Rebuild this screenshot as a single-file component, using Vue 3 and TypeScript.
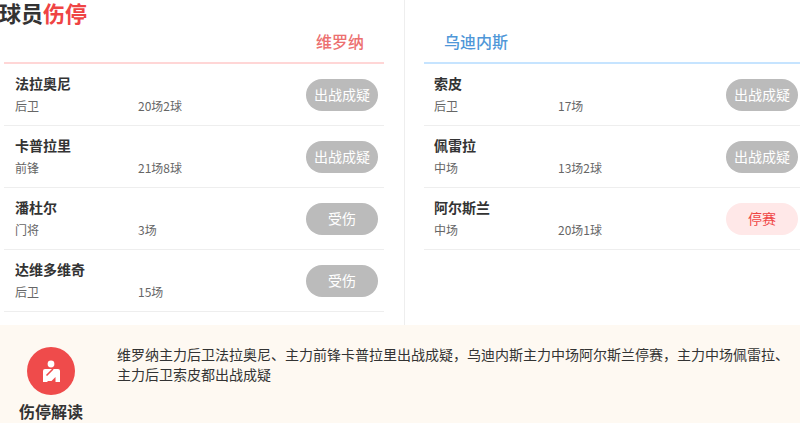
<script setup lang="ts">
interface Player { name: string; pos: string; stat: string; status: string; kind: 'grey' | 'red' }
const left: Player[] = [
  { name: '法拉奥尼', pos: '后卫', stat: '20场2球', status: '出战成疑', kind: 'grey' },
  { name: '卡普拉里', pos: '前锋', stat: '21场8球', status: '出战成疑', kind: 'grey' },
  { name: '潘杜尔', pos: '门将', stat: '3场', status: '受伤', kind: 'grey' },
  { name: '达维多维奇', pos: '后卫', stat: '15场', status: '受伤', kind: 'grey' },
]
const right: Player[] = [
  { name: '索皮', pos: '后卫', stat: '17场', status: '出战成疑', kind: 'grey' },
  { name: '佩雷拉', pos: '中场', stat: '13场2球', status: '出战成疑', kind: 'grey' },
  { name: '阿尔斯兰', pos: '中场', stat: '20场1球', status: '停赛', kind: 'red' },
]
</script>

<template>
  <div class="page">
    <div class="columns">
      <section class="col col-left">
        <h2 class="title">球员<span>伤停</span></h2>
        <div class="team team-left">维罗纳</div>
        <div v-for="p in left" :key="p.name" class="row">
          <div class="info">
            <div class="name">{{ p.name }}</div>
            <div class="meta"><span class="pos">{{ p.pos }}</span><span>{{ p.stat }}</span></div>
          </div>
          <span class="badge" :class="p.kind">{{ p.status }}</span>
        </div>
      </section>
      <section class="col col-right">
        <div class="team team-right">乌迪内斯</div>
        <div v-for="p in right" :key="p.name" class="row">
          <div class="info">
            <div class="name">{{ p.name }}</div>
            <div class="meta"><span class="pos">{{ p.pos }}</span><span>{{ p.stat }}</span></div>
          </div>
          <span class="badge" :class="p.kind">{{ p.status }}</span>
        </div>
      </section>
    </div>
    <div class="summary">
      <div class="summary-head">
        <div class="circle">
          <svg width="24" height="24" viewBox="0 0 24 24">
            <circle cx="12" cy="5" r="3.4" fill="#fff" />
            <path fill="#fff" d="M4 23 L4 12 Q4 10 6 10 L19 10 Q21 10 21 12 L21 23 Z" />
            <path fill="none" stroke="#ef4b4b" stroke-width="1.6" d="M7.5 16.5 L14 10" />
            <path fill="#ef4b4b" d="M8.5 23 L8.5 22 L12.5 22 L16.5 18 L16.5 23 Z" />
          </svg>
        </div>
        <div class="summary-label">伤停解读</div>
      </div>
      <p class="summary-text">维罗纳主力后卫法拉奥尼、主力前锋卡普拉里出战成疑，乌迪内斯主力中场阿尔斯兰停赛，主力中场佩雷拉、主力后卫索皮都出战成疑</p>
    </div>
  </div>
</template>

<style scoped>
.page {
  width: 800px;
  height: 423px;
  overflow: hidden;
  background: #fff;
  font-family: "Noto Sans CJK SC", "Liberation Sans", sans-serif;
  color: #333;
}
.columns {
  display: flex;
  height: 325px;
}
.col {
  box-sizing: border-box;
}
.col-left {
  width: 405px;
  padding: 0 20px 0 4px;
  border-right: 1px solid #eee;
}
.col-right {
  flex: 1;
  padding: 24px 0 0 19px;
}
.title {
  margin: 0 0 0 -5px;
  height: 24px;
  font-size: 22px;
  line-height: 24px;
  font-weight: 700;
  color: #333;
}
.title span {
  color: #ef4444;
}
.team {
  box-sizing: border-box;
  height: 40px;
  padding: 0 20px;
  font-size: 16px;
  line-height: 34px;
  font-weight: 500;
}
.team-left {
  text-align: right;
  color: #ec7070;
  border-bottom: 2px solid #ffd6d6;
}
.team-right {
  color: #4f97d8;
  border-bottom: 2px solid #c6e4ff;
}
.row {
  box-sizing: border-box;
  height: 62px;
  display: flex;
  align-items: center;
  justify-content: space-between;
  padding: 0 6px 0 11px;
  border-bottom: 1px solid #eee;
}
.col-right .row {
  padding: 0 2px 0 10px;
}
.name {
  font-size: 14px;
  line-height: 18px;
  font-weight: 700;
  color: #333;
}
.meta {
  display: flex;
  margin-top: 4px;
  font-size: 12px;
  line-height: 20px;
  color: #666;
}
.pos {
  width: 123px;
}
.col-right .pos {
  width: 124px;
}
.badge {
  width: 72px;
  height: 32px;
  border-radius: 16px;
  font-size: 14px;
  line-height: 31px;
  text-align: center;
}
.badge.grey {
  background: #bbb;
  color: #fff;
}
.badge.red {
  background: #ffe8e8;
  color: #ef4444;
}
.summary {
  height: 98px;
  background: #fef9f2;
  display: flex;
  box-sizing: border-box;
}
.summary-head {
  width: 102px;
  flex: none;
  display: flex;
  flex-direction: column;
  align-items: center;
  padding-top: 22px;
}
.circle {
  width: 48px;
  height: 48px;
  border-radius: 50%;
  background: #ef4b4b;
  display: flex;
  align-items: center;
  justify-content: center;
}
.summary-label {
  margin-top: 6px;
  font-size: 16px;
  line-height: 20px;
  font-weight: 700;
  color: #333;
}
.summary-text {
  margin: 19px 0 0 15px;
  width: 675px;
  font-size: 14px;
  line-height: 20px;
  color: #333;
}
</style>
